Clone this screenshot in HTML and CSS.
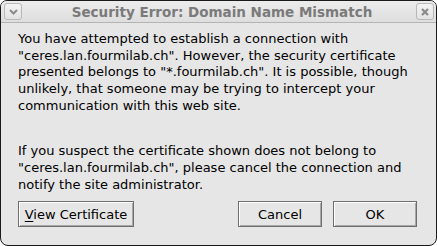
FILE: index.html
```html
<!DOCTYPE html>
<html>
<head>
<meta charset="utf-8">
<link rel="stylesheet" href="styles.css">
</head>
<body>
<div class="window">
  <div class="titlebar">
    <div class="tbtn">
      <svg width="11" height="8" viewBox="0 0 11 8"><path d="M2 2 L5.5 5.5 L9 2" fill="none" stroke="#8a8a8a" stroke-width="2"/></svg>
    </div>
    <div class="title">Security Error: Domain Name Mismatch</div>
    <div class="tbtn">
      <svg width="10" height="10" viewBox="0 0 10 10"><path d="M2 2 L8 8 M8 2 L2 8" fill="none" stroke="#8a8a8a" stroke-width="2.2"/></svg>
    </div>
  </div>
  <div class="content">
    <p class="msg">You have attempted to establish a connection with<br>"ceres.lan.fourmilab.ch". However, the security certificate<br>presented belongs to "*.fourmilab.ch". It is possible, though<br>unlikely, that someone may be trying to intercept your<br>communication with this web site.</p>
    <p class="msg second">If you suspect the certificate shown does not belong to<br>"ceres.lan.fourmilab.ch", please cancel the connection and<br>notify the site administrator.</p>
    <div class="buttons">
      <button class="btn view"><u>V</u>iew Certificate</button>
      <div class="spacer"></div>
      <button class="btn small">Cancel</button>
      <button class="btn small">OK</button>
    </div>
  </div>
</div>
</body>
</html>
```
FILE: styles.css
```css
html, body {
  margin: 0;
  padding: 0;
  background: #ffffff;
}
.window {
  width: 437px;
  height: 246px;
  box-sizing: border-box;
  border: 1px solid #1a1a1a;
  border-radius: 7px 7px 8px 8px;
  background: #e6e6e6;
  overflow: hidden;
  font-family: "DejaVu Sans", sans-serif;
  display: flex;
  flex-direction: column;
}
.titlebar {
  height: 21px;
  flex: none;
  display: flex;
  align-items: center;
  padding: 0 2px 0 3px;
  background: linear-gradient(#ececec, #dedede);
  border-bottom: 1px solid #b4b4b4;
}
.tbtn {
  width: 16px;
  height: 15px;
  flex: none;
  border: 1px solid #b8b8b8;
  border-radius: 3px;
  background: linear-gradient(#f4f4f4, #e2e2e2);
  display: flex;
  align-items: center;
  justify-content: center;
}
.title {
  flex: 1;
  text-align: center;
  font-weight: bold;
  font-size: 13.5px;
  color: #7a7a7a;
  padding-left: 6px;
}
.content {
  padding: 8px 17px 0 17px;
  display: flex;
  flex-direction: column;
}
.msg {
  margin: 0;
  font-size: 13px;
  line-height: 16.67px;
  color: #000;
}
.second {
  margin-top: 29px;
}
.buttons {
  display: flex;
  margin-top: 8px;
  gap: 11px;
  padding-right: 2px;
}
.spacer {
  flex: 1;
}
.btn {
  height: 26px;
  box-sizing: border-box;
  font-family: "DejaVu Sans", sans-serif;
  font-size: 13px;
  color: #000;
  background: #e6e6e6;
  border: 1px solid #6e6e6e;
  box-shadow: inset 1px 1px 0 #ffffff, inset -1px -1px 0 #a8a8a8;
  padding: 0;
  margin: 0;
}
.view {
  width: 116px;
}
.small {
  width: 84px;
}
.btn u {
  text-decoration-thickness: 1px;
  text-underline-offset: 2px;
}
```
